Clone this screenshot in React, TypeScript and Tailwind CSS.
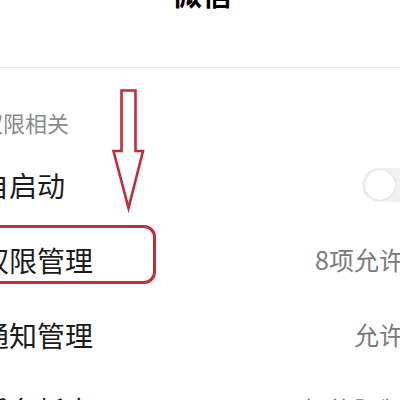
const font = { fontFamily: '"Noto Sans CJK SC", "Noto Sans", sans-serif' };

function Toggle() {
  return (
    <div className="h-[34px] w-[60px] rounded-full bg-[#f1f1f1] flex items-center pl-[3px] shrink-0 mr-[-22px]">
      <div className="h-[30px] w-[30px] rounded-full bg-white shadow-[0_0_2px_rgba(0,0,0,0.18)]" />
    </div>
  );
}

function Value({ text }: { text: string }) {
  return <span className="text-[25px] leading-none text-[#7a7a7a] mr-[-4px]">{text}</span>;
}

function Row({ label, right }: { label: string; right: React.ReactNode }) {
  return (
    <div className="h-[75px] flex items-center justify-between">
      <span className="text-[28px] leading-none text-[#1b1b1b] whitespace-nowrap">{label}</span>
      <div className="flex items-center whitespace-nowrap">{right}</div>
    </div>
  );
}

export default function App() {
  return (
    <div className="relative w-[400px] h-[400px] overflow-hidden bg-white" style={font}>
      <div className="h-[68px] border-b border-[#ececec] flex justify-center">
        <div className="mt-[-23px] ml-[4px] text-[30px] leading-[30px] font-bold text-black">微信</div>
      </div>

      <div className="ml-[-19px]">
        <div className="h-[79px] flex items-end pb-[12px]">
          <span className="text-[22px] leading-[26px] text-[#8a8a8a]">权限相关</span>
        </div>
        <Row label="自启动" right={<Toggle />} />
        <Row label="权限管理" right={<Value text="8项允许" />} />
        <Row label="通知管理" right={<Value text="允许" />} />
        <Row label="后台耗电" right={<Value text="智能限制" />} />
      </div>

      <div className="absolute left-[-20px] top-[225px] w-[176px] h-[59px] rounded-[12px] border-[3px] border-[#c62a3b]" />

      <svg className="absolute left-0 top-0" width="400" height="400" viewBox="0 0 400 400">
        <path
          d="M121.5 90.5 H135.5 V151 H143 L128.5 208 L113.5 151 H121.5 Z"
          fill="none"
          stroke="#c62a3b"
          strokeWidth="2.6"
          strokeLinejoin="miter"
        />
      </svg>
    </div>
  );
}
